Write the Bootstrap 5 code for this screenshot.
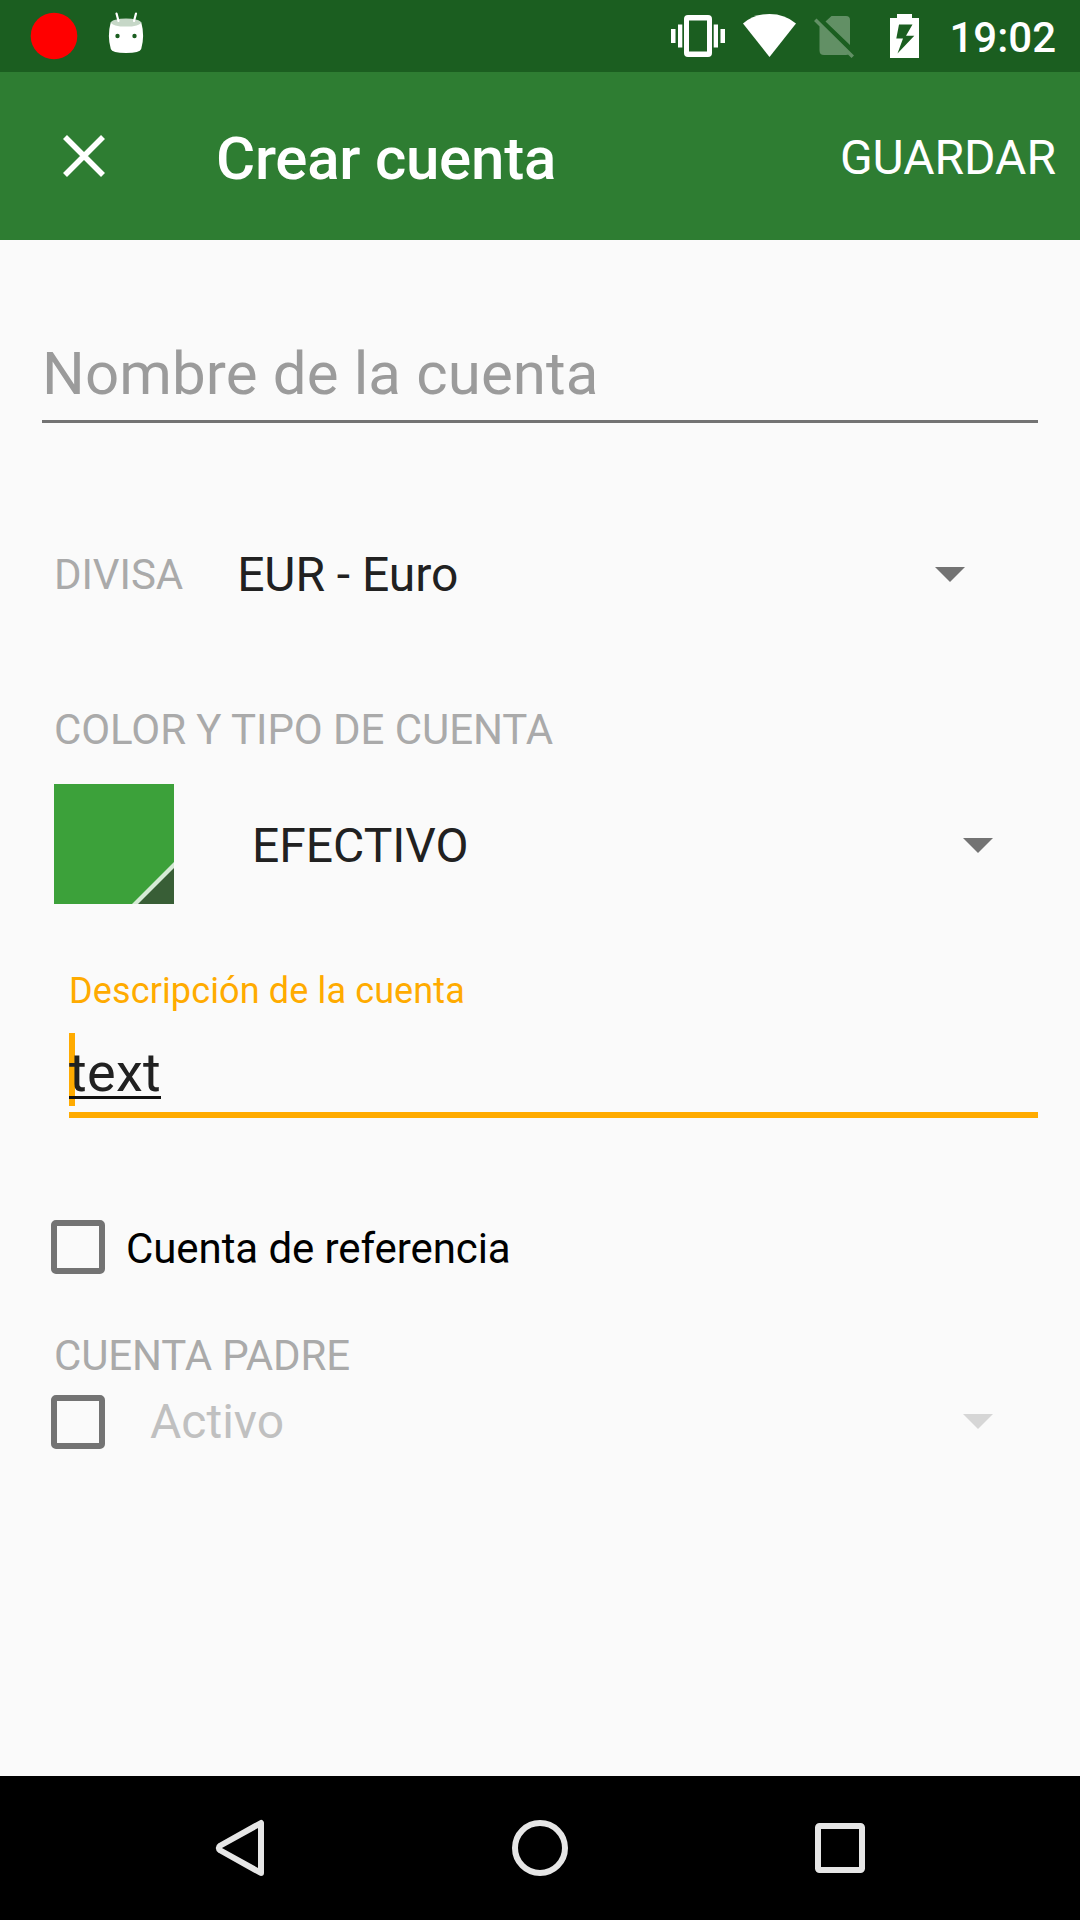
<!DOCTYPE html>
<html lang="es">
<head>
<meta charset="utf-8">
<meta name="viewport" content="width=device-width, initial-scale=1">
<title>Crear cuenta</title>
<link rel="stylesheet" href="https://cdn.jsdelivr.net/npm/bootstrap@5.3.0/dist/css/bootstrap.min.css">
<style>
body { font-family: Roboto, sans-serif; font-size: 42px; line-height: 1; background: #fafafa; color: #212121; width: 1080px; height: 1920px; overflow: hidden; }
svg { display: block; flex: none; }
.status-bar { height: 72px; background: #1b5e20; }
.clock { font-size: 42px; font-weight: 500; color: #fff; padding: 3px 24px 0 29px; }
.app-bar { height: 168px; background: #2e7d32; padding: 0 24px 0 60px; }
.app-title { font-size: 60px; font-weight: 500; margin: 5px 0 0 108px; letter-spacing: -.25px; }
.save-btn { font-size: 48px; line-height: 1; padding: 3px 0 0; border: 0; }
.nav-bar { height: 144px; background: #000; }
.form-area { padding: 0 42px; }
.name-field { height: 103px; margin-top: 80px; font-size: 60px; padding: 24px 0 0; color: #9b9b9b; border-bottom: 3px solid #737373; line-height: 60px; letter-spacing: .13px; }
.cap-label { color: #aaa; font-size: 42px; letter-spacing: -.06px; }
.value-text { font-size: 48px; }
.currency-row { height: 144px; margin-top: 79px; padding: 0 73px 0 12px; }
.currency-row span { padding-top: 2px; }
.currency-value { margin-left: 54px; letter-spacing: -.05px; }
.color-label { margin: 63px 0 0 12px; height: 42px; }
.type-row { height: 120px; margin-top: 33px; padding: 0 45px 0 12px; }
.type-row .value-text { margin-left: 78px; padding-top: 4px; }
.type-row .arrow { margin-top: 3px; }
.desc-field { margin: 67px 0 0 27px; height: 147px; border-bottom: 6px solid #ffab00; }
.desc-label { font-size: 36px; color: #ffab00; height: 62px; padding-top: 2px; letter-spacing: .13px; }
.desc-input { height: 73px; font-size: 54px; }
.desc-input .caret { left: 0; top: 0; width: 6px; height: 73px; background: #ffab00; }
.composing { border-bottom: 3px solid #111; height: 66px; line-height: 80px; letter-spacing: .3px; }
.ref-row { margin-top: 102px; }
.ref-row span { margin-left: 21px; padding-top: 4px; letter-spacing: -.08px; }
.parent-label { margin: 61px 0 0 12px; letter-spacing: -.12px; }
.parent-row { margin-top: 18px; padding-right: 45px; }
.parent-row .value-text { margin-left: 45px; color: #c0c0c0; }
.parent-row .arrow { margin-bottom: 2px; }
.check-row { height: 54px; padding-left: 9px; }
.check-row .check-box[type=checkbox] { width: 54px; height: 54px; border: 6px solid #737373; border-radius: 5px; background: transparent; margin: 0; flex: none; }
</style>
<script src="https://cdn.jsdelivr.net/npm/bootstrap@5.3.0/dist/js/bootstrap.bundle.min.js"></script>
</head>
<body class="d-flex flex-column m-0">
<header>
  <div class="status-bar d-flex align-items-center">
    <svg width="160" height="72" viewBox="0 0 160 72">
      <circle cx="54" cy="36" r="23.3" fill="#f00"/>
      <path d="M110.800 22Q126 30 141.200 22Q145 36 141.200 49Q140 53 126 53Q112 53 110.800 49Q107 36 110.800 22Z" fill="#fff"/>
      <ellipse cx="126" cy="22.600" rx="15" ry="4" fill="#c6d7c7"/>
      <path d="M116.500 13.500L118.500 21M136 13.500L134 21" stroke="#fff" stroke-width="2.200" stroke-linecap="round"/>
      <circle cx="117.500" cy="36" r="2.200" fill="#1b5e20"/><circle cx="134.500" cy="36" r="2.200" fill="#1b5e20"/>
    </svg>
    <svg class="ms-auto" width="256" height="72" viewBox="664 0 256 72" fill="#fff">
      <path d="M671 29h4.500v14H671zM678 24.500h4.300v23H678zM713.700 24.500h4.300v23h-4.300zM720.500 29h4.500v14h-4.500z"/>
      <path fill-rule="evenodd" d="M688 15h20q4 0 4 4v34q0 4-4 4h-20q-4 0-4-4V19q0-4 4-4zM689 20.500v31h18v-31z"/>
      <path d="M769.500 57L743 23.500Q754 14 769.500 14T796 23.500z"/>
      <path fill="#629065" d="M831.500 16h14.500q4 0 4 4v25L825.500 21.500zM819.500 24.500L849 54q-1 1-3 1h-22q-4.500 0-4.500-4.500zM814 21l2.500-2.500L854 55.500l-2.500 2.500z"/>
      <path fill-rule="evenodd" d="M897 14h15v4h7v40h-29V18h7zM899 24.500L896.300 38.500H903L897.500 53.500L914.300 35.800H906L912.500 24.500z"/>
    </svg>
    <span class="clock">19:02</span>
  </div>
  <nav class="app-bar d-flex align-items-center text-white">
    <svg width="48" height="48" viewBox="0 0 48 48" role="img" aria-label="Cerrar"><path d="M5 5L43 43M43 5L5 43" stroke="#fff" stroke-width="5.600"/></svg>
    <h1 class="app-title mb-0">Crear cuenta</h1>
    <button class="btn save-btn text-white ms-auto" type="button">GUARDAR</button>
  </nav>
</header>
<main class="form-area flex-grow-1">
  <div class="name-field">Nombre de la cuenta</div>
  <div class="currency-row d-flex align-items-center">
    <span class="cap-label">DIVISA</span>
    <span class="value-text currency-value">EUR - Euro</span>
    <svg class="ms-auto" width="30" height="15"><path d="M0 0H30L15 15z" fill="#737373"/></svg>
  </div>
  <div class="cap-label color-label">COLOR Y TIPO DE CUENTA</div>
  <div class="type-row d-flex align-items-center">
    <svg width="120" height="120"><path d="M0 0H120V120H0z" fill="#3ca13a"/><path d="M120 78V120H78z" fill="#d7ebd7"/><path d="M120 84V120H84z" fill="#385e36"/></svg>
    <span class="value-text">EFECTIVO</span>
    <svg class="arrow ms-auto" width="30" height="15"><path d="M0 0H30L15 15z" fill="#737373"/></svg>
  </div>
  <div class="desc-field">
    <div class="desc-label">Descripción de la cuenta</div>
    <div class="desc-input position-relative"><span class="caret position-absolute"></span><span class="composing position-absolute top-0 start-0">text</span></div>
  </div>
  <label class="check-row ref-row d-flex align-items-center">
    <input type="checkbox" class="form-check-input check-box">
    <span class="text-black">Cuenta de referencia</span>
  </label>
  <div class="cap-label parent-label">CUENTA PADRE</div>
  <div class="check-row parent-row d-flex align-items-center">
    <input type="checkbox" class="form-check-input check-box" aria-label="Cuenta padre">
    <span class="value-text">Activo</span>
    <svg class="arrow ms-auto" width="30" height="15"><path d="M0 0H30L15 15z" fill="#d6d6d6"/></svg>
  </div>
</main>
<footer class="nav-bar">
  <svg width="1080" height="144" viewBox="0 0 1080 144" fill="none" stroke="#e6e6e6" stroke-width="6">
    <path d="M261 47V97L220.500 74.500Q217 72 220.500 69.500z" stroke-linejoin="round"/>
    <circle cx="540" cy="72" r="25"/>
    <rect x="818" y="50" width="44" height="44" rx="1.500"/>
  </svg>
</footer>
</body>
</html>
